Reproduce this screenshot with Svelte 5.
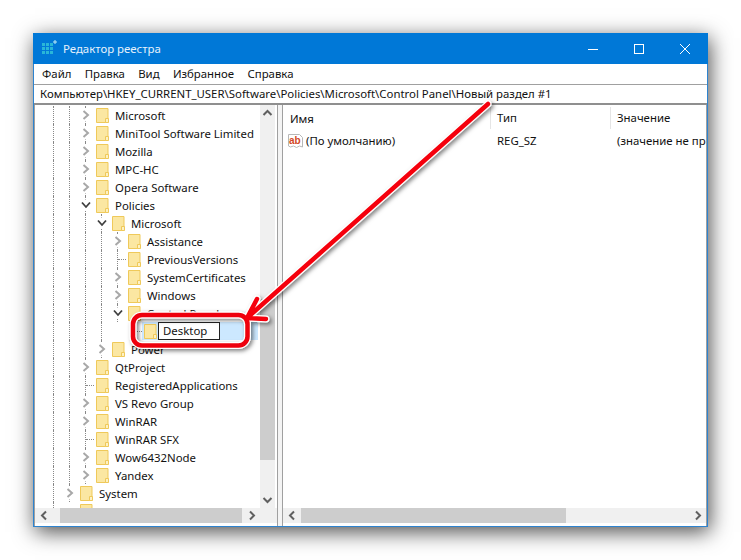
<script>
  const rows = [
    { t: 'Microsoft', g: [1, 1], k: 'c' },
    { t: 'MiniTool Software Limited', g: [1, 1], k: 'c' },
    { t: 'Mozilla', g: [1, 1], k: 'c' },
    { t: 'MPC-HC', g: [1, 1], k: 'c' },
    { t: 'Opera Software', g: [1, 1], k: 'c' },
    { t: 'Policies', g: [1, 1], k: 'e' },
    { t: 'Microsoft', g: [1, 1, 1], k: 'e' },
    { t: 'Assistance', g: [1, 1, 1, 1], k: 'c' },
    { t: 'PreviousVersions', g: [1, 1, 1, 1], k: 'l' },
    { t: 'SystemCertificates', g: [1, 1, 1, 1], k: 'c' },
    { t: 'Windows', g: [1, 1, 1, 1], k: 'c' },
    { t: 'Control Panel', g: [1, 1, 1, 1], k: 'e' },
    { t: '', g: [1, 1, 1, 1, 0], k: 'l', edit: true },
    { t: 'Power', g: [1, 1, 1], k: 'c' },
    { t: 'QtProject', g: [1, 1], k: 'c' },
    { t: 'RegisteredApplications', g: [1, 1], k: 'l' },
    { t: 'VS Revo Group', g: [1, 1], k: 'c' },
    { t: 'WinRAR', g: [1, 1], k: 'c' },
    { t: 'WinRAR SFX', g: [1, 1], k: 'l' },
    { t: 'Wow6432Node', g: [1, 1], k: 'c' },
    { t: 'Yandex', g: [1, 1], k: 'c' },
    { t: 'System', g: [1], k: 'c' },
    { t: '', g: [1], k: 'n' }
  ];
  const menu = ['Файл', 'Правка', 'Вид', 'Избранное', 'Справка'];
</script>

<div class="page">
  <div class="window">
    <header class="title">
      <svg class="appicon" width="16" height="16" viewBox="0 0 16 16">
        <g fill="#29b6d8">
          <rect x="0" y="3" width="3" height="3" /><rect x="4" y="3" width="3" height="3" /><rect x="8" y="3" width="3" height="3" />
          <rect x="0" y="7" width="3" height="3" /><rect x="4" y="7" width="3" height="3" /><rect x="8" y="7" width="3" height="3" />
          <rect x="0" y="11" width="3" height="3" /><rect x="4" y="11" width="3" height="3" /><rect x="8" y="11" width="3" height="3" />
        </g>
        <path d="M13 0v4M11 2h4" stroke="#bdeaf5" stroke-width="1" />
      </svg>
      <span>Редактор реестра</span>
      <div class="controls">
        <span class="ctl"><svg width="12" height="12" viewBox="0 0 12 12"><path d="M1 6.500h10" stroke="#fff" /></svg></span>
        <span class="ctl"><svg width="12" height="12" viewBox="0 0 12 12"><rect x="1.500" y="1.500" width="9" height="9" fill="none" stroke="#fff" /></svg></span>
        <span class="ctl"><svg width="12" height="12" viewBox="0 0 12 12"><path d="M1 1l10 10M11 1L1 11" stroke="#fff" /></svg></span>
      </div>
    </header>

    <nav class="menu">
      {#each menu as m}<span>{m}</span>{/each}
    </nav>

    <div class="address">Компьютер\HKEY_CURRENT_USER\Software\Policies\Microsoft\Control Panel\Новый раздел #1</div>

    <div class="panes">
      <section class="left">
        <div class="left-main">
          <div class="tree">
            {#each rows as r}
              <div class="row">
                {#each r.g as g}
                  <span class="cell">{#if g}<i class="guide"></i>{/if}</span>
                {/each}
                <span class="cell">
                  {#if r.k === 'c'}
                    <i class="guide"></i>
                    <svg class="chev" width="9" height="11" viewBox="0 0 9 11"><path d="M2 1.500L6.500 5.500L2 9.500" fill="none" stroke="#a8a8a8" stroke-width="2" /></svg>
                  {:else if r.k === 'e'}
                    <i class="guide"></i>
                    <svg class="chev" width="11" height="9" viewBox="0 0 11 9"><path d="M1.500 2L5.500 6.500L9.500 2" fill="none" stroke="#404040" stroke-width="1.800" /></svg>
                  {:else if r.k === 'l'}
                    <i class="guide"></i><i class="stub"></i>
                  {/if}
                </span>
                {#if r.edit}<span class="sel"></span>{/if}
                <svg class="folder" width="13" height="15" viewBox="0 0 13 15">
                  <path d="M.5.500h11.500v14H.5z" fill="#fbe7a2" stroke="#efc95a" />
                  <path d="M9.500 14.500v-4h3v4z" fill="#fdf1c4" stroke="#efc95a" />
                </svg>
                {#if r.edit}
                  <span class="edit">Desktop</span>
                {:else}
                  <span class="label">{r.t}</span>
                {/if}
              </div>
            {/each}
          </div>
          <div class="vbar">
            <svg width="15" height="16" viewBox="0 0 15 16"><path d="M3.500 10l4-4 4 4" fill="none" stroke="#606060" stroke-width="2" /></svg>
            <div class="vtrack"><div class="vthumb"></div></div>
            <svg width="15" height="16" viewBox="0 0 15 16"><path d="M3.500 6l4 4 4-4" fill="none" stroke="#606060" stroke-width="2" /></svg>
          </div>
        </div>
        <div class="hbar hbar-left">
          <svg width="16" height="15" viewBox="0 0 16 15"><path d="M10 3.500l-4 4 4 4" fill="none" stroke="#606060" stroke-width="2" /></svg>
          <div class="htrack"><div class="hthumb left-thumb"></div></div>
          <svg width="16" height="15" viewBox="0 0 16 15"><path d="M6 3.500l4 4-4 4" fill="none" stroke="#606060" stroke-width="2" /></svg>
        </div>
      </section>

      <div class="split"></div>

      <section class="right">
        <div class="list">
          <div class="cols">
            <span class="c1">Имя</span>
            <span class="c2">Тип</span>
            <span class="c3">Значение</span>
          </div>
          <div class="item">
            <span class="c1 name">
              <svg width="16" height="16" viewBox="0 0 16 16">
                <path d="M.5 1.500h11l3 3v9.500l-3-1-3 1.500-3-1.500-3 1-2-1z" fill="#fff" stroke="#b8b8b8" />
                <text x="1" y="10.500" class="ab">ab</text>
              </svg>
              (По умолчанию)
            </span>
            <span class="c2">REG_SZ</span>
            <span class="c3">(значение не присвоено)</span>
          </div>
        </div>
        <div class="hbar hbar-right">
          <svg width="16" height="15" viewBox="0 0 16 15"><path d="M10 3.500l-4 4 4 4" fill="none" stroke="#606060" stroke-width="2" /></svg>
          <div class="htrack"><div class="hthumb right-thumb"></div></div>
          <svg width="16" height="15" viewBox="0 0 16 15"><path d="M6 3.500l4 4-4 4" fill="none" stroke="#606060" stroke-width="2" /></svg>
        </div>
      </section>
    </div>
  </div>

  <svg class="overlay" width="741" height="560" viewBox="0 0 741 560">
    <defs>
      <filter id="sh" x="-20%" y="-20%" width="140%" height="140%">
        <feDropShadow dx="2" dy="2" stdDeviation="2" flood-color="#000" flood-opacity=".5" />
      </filter>
    </defs>
    <g filter="url(#sh)" fill="none" stroke-linecap="round" stroke-linejoin="round">
      <rect x="133" y="315" width="114.500" height="30.500" rx="9" stroke="#fff" stroke-width="7" />
      <path d="M488 104L247 318M257 299L247 318L266 319" stroke="#fff" stroke-width="7" />
      <rect x="133" y="315" width="114.500" height="30.500" rx="9" stroke="#ee0008" stroke-width="4.500" />
      <path d="M488 104L247 318M257 299L247 318L266 319" stroke="#f5000a" stroke-width="4.500" />
    </g>
  </svg>
</div>

<style>
  :global(body) { margin: 0; background: #fff; }
  .page {
    position: relative;
    width: 741px;
    height: 560px;
    padding: 33px 0 0 33px;
    box-sizing: border-box;
    overflow: hidden;
    font: 11.400px "Noto Sans", "Open Sans", sans-serif;
    color: #111;
  }
  .window {
    width: 675px;
    height: 494px;
    box-sizing: border-box;
    background: #fff;
    border: 1px solid #2d83cf;
    box-shadow: 2px 5px 20px rgba(0, 0, 0, .7);
    display: flex;
    flex-direction: column;
  }
  .title {
    height: 31px;
    background: #0078d7;
    margin: -1px -1px 0;
    flex: none;
    display: flex;
    align-items: center;
    padding-left: 9px;
    color: #e6f1fb;
  }
  .appicon { margin-right: 5px; margin-top: -1px; }
  .controls { margin-left: auto; display: flex; }
  .ctl {
    width: 46px;
    height: 31px;
    display: flex;
    align-items: center;
    justify-content: center;
  }
  .menu {
    height: 20px;
    flex: none;
    display: flex;
    align-items: center;
    gap: 13.300px;
    padding: 0 0 2px 8px;
    box-sizing: border-box;
  }
  .address {
    height: 18px;
    line-height: 18px;
    flex: none;
    padding-left: 6px;
    border-top: 1px solid #a0a0a0;
    border-bottom: 2px solid #8f8f8f;
    white-space: nowrap;
    overflow: hidden;
  }
  .panes {
    flex: 1;
    min-height: 0;
    display: flex;
    border-left: 1px solid #a0a0a0;
    border-right: 1px solid #a0a0a0;
    padding-bottom: 3px;
  }
  .left { width: 242px; flex: none; display: flex; flex-direction: column; }
  .left-main { flex: 1; min-height: 0; display: flex; }
  .tree { flex: 1; min-width: 0; overflow: hidden; padding: 1px 0 0 11px; }
  .row { height: 18px; display: flex; align-items: center; position: relative; }
  .cell { width: 16px; height: 18px; flex: none; position: relative; display: block; }
  .guide {
    position: absolute;
    left: 7px;
    top: 0;
    bottom: 0;
    border-left: 1px dotted #888;
  }
  .stub {
    position: absolute;
    left: 8px;
    top: 9px;
    width: 8px;
    border-top: 1px dotted #888;
  }
  .chev {
    position: absolute;
    left: 50%;
    top: 50%;
    transform: translate(-50%, -50%);
    background: #fff;
    box-shadow: 0 0 0 1px #fff;
  }
  .folder { margin-left: 2px; flex: none; position: relative; }
  .label { margin-left: 6px; white-space: nowrap; }
  .edit {
    margin-left: 1px;
    width: 56px;
    height: 16px;
    line-height: 16px;
    padding-left: 4px;
    border: 1px solid #222;
    background: #fff;
    position: relative;
    flex: none;
  }
  .sel {
    position: absolute;
    left: 96px;
    right: 2px;
    top: 0;
    bottom: 0;
    background: #cce8ff;
  }
  .vbar {
    width: 15px;
    flex: none;
    background: #f0f0f0;
    display: flex;
    flex-direction: column;
    margin-right: 2px;
  }
  .vtrack { flex: 1; position: relative; }
  .vthumb { position: absolute; left: 0; right: 0; top: 178px; height: 161px; background: #cdcdcd; }
  .hbar { height: 15px; flex: none; background: #f0f0f0; display: flex; }
  .hbar-left { padding: 0 17px 0 1px; }
  .hbar-right { padding: 0 0 0 1px; }
  .htrack { flex: 1; position: relative; }
  .hthumb { position: absolute; top: 0; bottom: 0; background: #cdcdcd; }
  .left-thumb { left: 8px; width: 182px; }
  .right-thumb { left: 1px; width: 265px; }
  .split {
    width: 6px;
    flex: none;
    background: #f4f4f4;
    border-left: 1px solid #a0a0a0;
    border-right: 1px solid #a0a0a0;
    box-sizing: border-box;
    margin-bottom: -3px;
  }
  .right { flex: 1; min-width: 0; display: flex; flex-direction: column; }
  .list { flex: 1; min-height: 0; overflow: hidden; }
  .cols, .item { display: flex; white-space: nowrap; }
  .cols { height: 25px; align-items: center; padding-top: 1px; box-sizing: border-box; }
  .item { height: 21px; align-items: center; }
  .c1 { width: 207px; padding-left: 7px; flex: none; box-sizing: border-box; }
  .c2 { width: 120px; padding-left: 7px; flex: none; box-sizing: border-box; }
  .c3 { padding-left: 7px; flex: none; }
  .cols .c2, .cols .c3 { border-left: 1px solid #e5e5e5; line-height: 22px; padding-left: 6px; }
  .name { display: flex; align-items: center; gap: 2px; padding-left: 5px; }
  .ab { font: bold 10px "Liberation Sans", sans-serif; fill: #d24726; }
  .overlay { position: absolute; left: 0; top: 0; pointer-events: none; }
</style>
